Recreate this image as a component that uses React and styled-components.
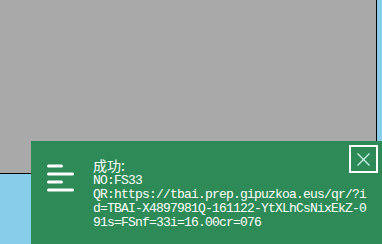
import React from "react";
import styled, { createGlobalStyle } from "styled-components";

const GlobalStyle = createGlobalStyle`
  html, body {
    margin: 0;
    padding: 0;
    background: #87ceeb;
    width: 382px;
    height: 244px;
    overflow: hidden;
  }
  #root {
    position: relative;
    width: 382px;
    height: 244px;
  }
`;

const Stage = styled.div`
  width: 376px;
  height: 173px;
  background: #a9a9a9;
  border-right: 1px solid #000;
  border-bottom: 1px solid #000;
`;

const Toast = styled.div`
  position: absolute;
  left: 31px;
  top: 141px;
  right: 0;
  bottom: 0;
  background: #2e8b57;
  display: flex;
  align-items: flex-start;
  padding-left: 16px;
  box-sizing: border-box;
`;

const IconBox = styled.div`
  margin-top: 22px;
  width: 27px;
  height: 30px;
  flex: none;
`;

const Body = styled.div`
  margin-top: 16px;
  margin-left: 19px;
  width: 276px;
  color: #fff;
  font-family: "Liberation Mono", "Noto Sans CJK SC", monospace;
  font-size: 13px;
  letter-spacing: -0.8px;
  line-height: 14.3px;
  word-break: break-all;
`;

const Title = styled.div`
  font-family: "Noto Sans CJK SC", sans-serif;
  font-size: 14px;
  line-height: 16.5px;
  letter-spacing: 0;
`;

const Line = styled.div``;

const Close = styled.button`
  position: absolute;
  top: 4px;
  right: 4px;
  width: 29px;
  height: 28px;
  padding: 0;
  margin: 0;
  border: 2px solid #fff;
  background: transparent;
  display: flex;
  align-items: center;
  justify-content: center;
  box-sizing: border-box;
`;

function MenuIcon() {
  return (
    <svg width="27" height="30" viewBox="0 0 27 30">
      <g stroke="#fff" strokeWidth="3" strokeLinecap="round">
        <line x1="1.5" y1="3" x2="14.5" y2="3" />
        <line x1="1.5" y1="11" x2="25.5" y2="11" />
        <line x1="1.5" y1="19" x2="14.5" y2="19" />
        <line x1="1.5" y1="27" x2="25.5" y2="27" />
      </g>
    </svg>
  );
}

function CloseIcon() {
  return (
    <svg width="13" height="13" viewBox="0 0 13 13">
      <g stroke="#c8f2e4" strokeWidth="1.2">
        <line x1="0.5" y1="0.5" x2="12.5" y2="12.5" />
        <line x1="12.5" y1="0.5" x2="0.5" y2="12.5" />
      </g>
    </svg>
  );
}

export default function App() {
  return (
    <>
      <GlobalStyle />
      <Stage />
      <Toast>
        <IconBox>
          <MenuIcon />
        </IconBox>
        <Body>
          <Title>成功:</Title>
          <Line>NO:FS33</Line>
          <Line>
            QR:https://tbai.prep.gipuzkoa.eus/qr/?id=TBAI-X4897981Q-161122-YtXLhCsNixEkZ-091s=FSnf=33i=16.00cr=076
          </Line>
        </Body>
        <Close aria-label="close">
          <CloseIcon />
        </Close>
      </Toast>
    </>
  );
}
